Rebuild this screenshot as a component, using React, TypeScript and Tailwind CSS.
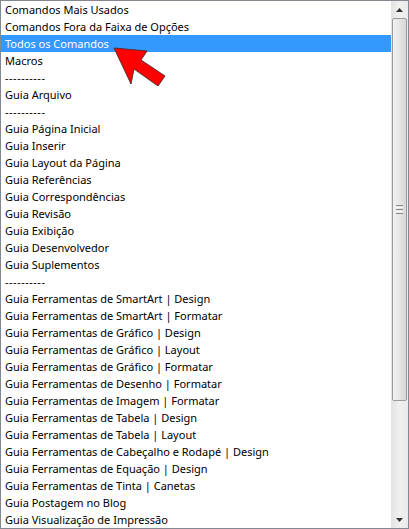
import React from "react";

const items = [
  "Comandos Mais Usados",
  "Comandos Fora da Faixa de Opções",
  "Todos os Comandos",
  "Macros",
  "----------",
  "Guia Arquivo",
  "----------",
  "Guia Página Inicial",
  "Guia Inserir",
  "Guia Layout da Página",
  "Guia Referências",
  "Guia Correspondências",
  "Guia Revisão",
  "Guia Exibição",
  "Guia Desenvolvedor",
  "Guia Suplementos",
  "----------",
  "Guia Ferramentas de SmartArt | Design",
  "Guia Ferramentas de SmartArt | Formatar",
  "Guia Ferramentas de Gráfico | Design",
  "Guia Ferramentas de Gráfico | Layout",
  "Guia Ferramentas de Gráfico | Formatar",
  "Guia Ferramentas de Desenho | Formatar",
  "Guia Ferramentas de Imagem | Formatar",
  "Guia Ferramentas de Tabela | Design",
  "Guia Ferramentas de Tabela | Layout",
  "Guia Ferramentas de Cabeçalho e Rodapé | Design",
  "Guia Ferramentas de Equação | Design",
  "Guia Ferramentas de Tinta | Canetas",
  "Guia Postagem no Blog",
  "Guia Visualização de Impressão",
];

export default function App() {
  return (
    <div className="w-[409px] h-[529px] bg-white">
      <div className="relative flex h-[529px] w-[409px] border border-[#828790] bg-white">
        <div className="flex-1 flex flex-col" style={{ fontFamily: '"Noto Sans", sans-serif' }}>
          {items.map((t, i) => (
            <div
              key={i}
              className={
                "h-[17px] pl-[4px] text-[11px] leading-[17px] whitespace-nowrap " +
                (t.startsWith("-") ? "tracking-[0.5px] " : "") +
                (i === 2 ? "bg-[#3399ff] text-white" : "text-black")
              }
            >
              {t}
            </div>
          ))}
        </div>
        <div className="w-[17px] flex flex-col bg-gradient-to-r from-[#e3e3e3] via-[#f0f0f0] to-[#eaeaea]">
          <div className="h-[17px] flex items-center justify-center">
            <svg width="7" height="4" viewBox="0 0 7 4">
              <polygon points="3.5,0 7,4 0,4" fill="#333" />
            </svg>
          </div>
          <div className="h-[383px] mx-[1px] rounded-[2px] border border-[#9a9a9a] bg-gradient-to-r from-[#f2f2f2] via-[#e6e6e6] to-[#d6d6d6] flex items-center justify-center">
            <div className="flex flex-col gap-[1px]">
              <div className="w-[7px] h-[1px] bg-[#8a8a8a]" />
              <div className="w-[7px] h-[1px] bg-[#fdfdfd]" />
              <div className="w-[7px] h-[1px] bg-[#8a8a8a]" />
              <div className="w-[7px] h-[1px] bg-[#fdfdfd]" />
              <div className="w-[7px] h-[1px] bg-[#8a8a8a]" />
            </div>
          </div>
          <div className="flex-1" />
          <div className="h-[17px] flex items-center justify-center">
            <svg width="7" height="4" viewBox="0 0 7 4">
              <polygon points="0,0 7,0 3.5,4" fill="#333" />
            </svg>
          </div>
        </div>
        <svg
          className="absolute left-[109px] top-[43px]"
          width="62"
          height="48"
          viewBox="0 0 62 48"
        >
          <polygon
            points="4,4 37,7 31,16 55,32 48,42 24,25 21,40"
            fill="#ff0000"
            stroke="#5a3030"
            strokeWidth="1"
            strokeLinejoin="miter"
          />
        </svg>
      </div>
    </div>
  );
}
